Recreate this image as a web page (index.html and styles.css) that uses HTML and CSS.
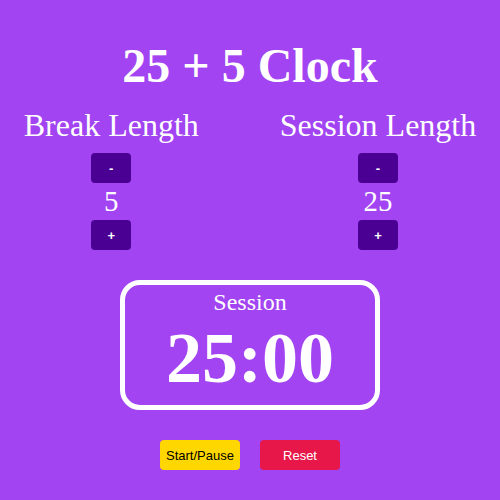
FILE: index.html
```html
<!DOCTYPE html>
<html>
<head>
<meta charset="utf-8">
<link rel="stylesheet" href="styles.css">
</head>
<body>
<main class="app">
  <h1 class="title">25 + 5 Clock</h1>
  <div class="lengths">
    <div class="length">
      <h2 class="length-label">Break Length</h2>
      <button class="step">-</button>
      <div class="length-value">5</div>
      <button class="step">+</button>
    </div>
    <div class="length">
      <h2 class="length-label">Session Length</h2>
      <button class="step">-</button>
      <div class="length-value">25</div>
      <button class="step">+</button>
    </div>
  </div>
  <div class="timer">
    <div class="timer-label">Session</div>
    <div class="timer-time">25:00</div>
  </div>
  <div class="controls">
    <button class="ctrl start">Start/Pause</button>
    <button class="ctrl reset">Reset</button>
  </div>
</main>
</body>
</html>
```

FILE: styles.css
```css
html, body {
  margin: 0;
  padding: 0;
}
body {
  background: #a244f2;
  color: #fff;
  font-family: "Liberation Serif", "Times New Roman", serif;
  width: 500px;
  height: 500px;
  overflow: hidden;
}
.app {
  display: flex;
  flex-direction: column;
  align-items: center;
  padding-top: 38px;
}
.title {
  margin: 0;
  font-size: 48px;
  font-weight: bold;
  line-height: 55px;
}
.lengths {
  display: flex;
  justify-content: center;
  gap: 81px;
  margin-top: 14px;
}
.length {
  display: flex;
  flex-direction: column;
  align-items: center;
}
.length-label {
  margin: 0 0 9px;
  font-size: 32px;
  font-weight: normal;
  line-height: 37px;
}
.step {
  width: 40px;
  height: 30px;
  border: none;
  border-radius: 4px;
  background: #4b0094;
  color: #fff;
  font-family: "Liberation Sans", Arial, sans-serif;
  font-weight: bold;
  font-size: 13px;
  padding: 0;
}
.length-value {
  font-size: 28.8px;
  line-height: 37px;
}
.timer {
  margin-top: 30px;
  width: 250px;
  border: 5px solid #fff;
  border-radius: 20px;
  padding: 4px 0 6px;
  display: flex;
  flex-direction: column;
  align-items: center;
}
.timer-label {
  font-size: 24px;
  line-height: 27.6px;
}
.timer-time {
  font-size: 72px;
  font-weight: bold;
  line-height: 82.8px;
}
.controls {
  display: flex;
  gap: 20px;
  margin-top: 30px;
}
.ctrl {
  width: 80px;
  height: 30px;
  border: none;
  border-radius: 4px;
  font-family: "Liberation Sans", Arial, sans-serif;
  font-size: 13px;
  padding: 0;
}
.start {
  background: #ffd700;
  color: #000;
}
.reset {
  background: #e8174a;
  color: #fff;
}
```
